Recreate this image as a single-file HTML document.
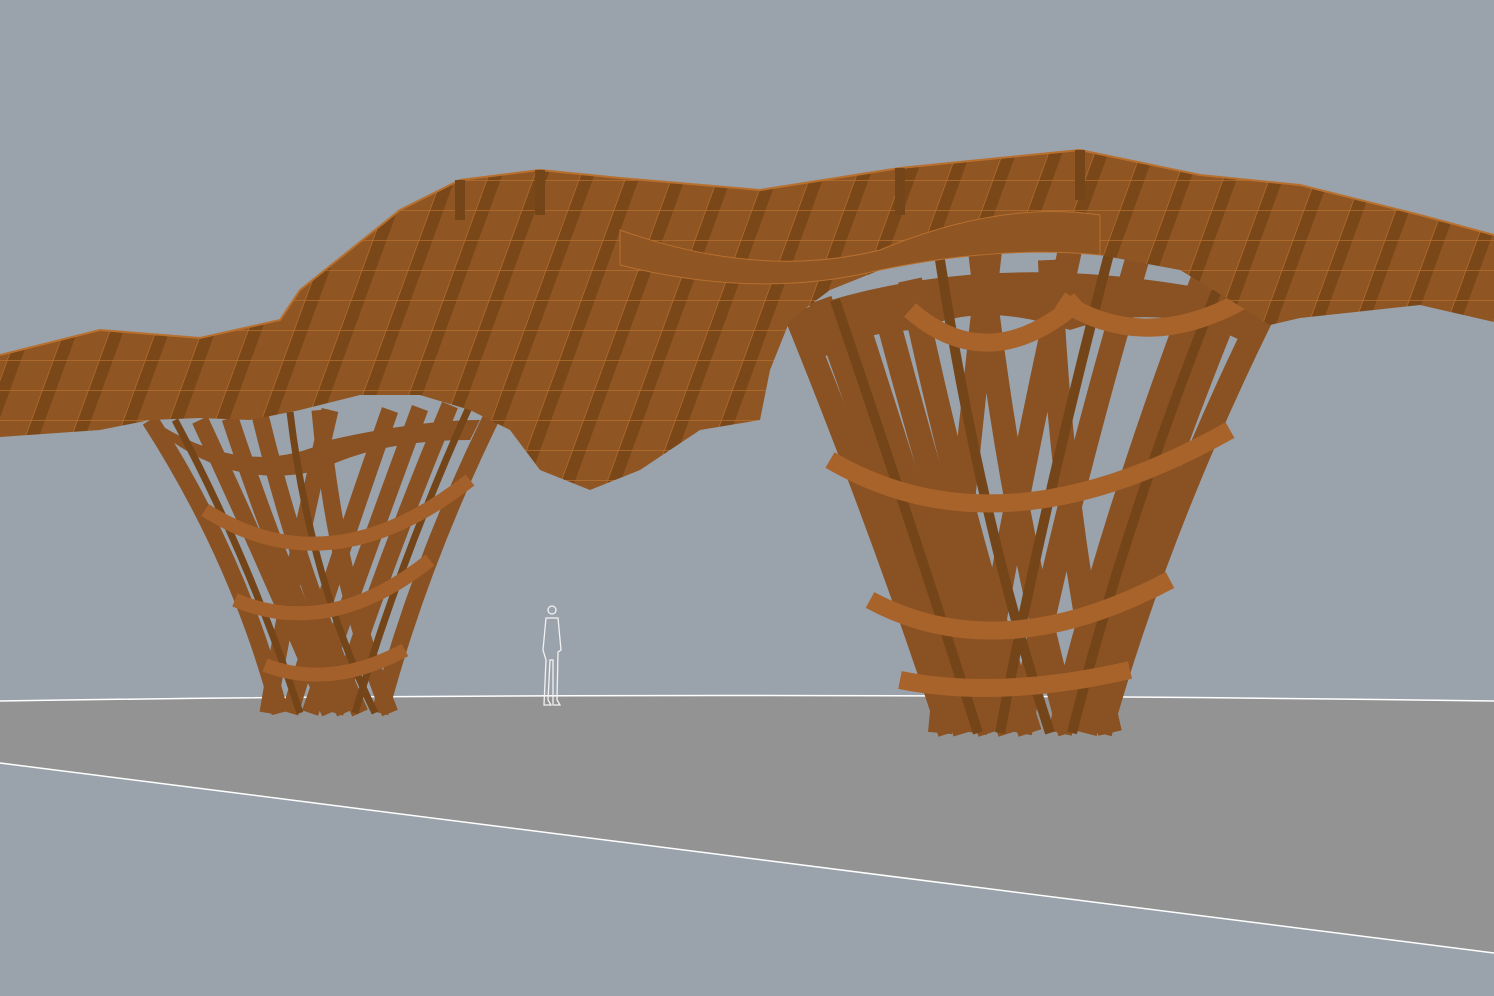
<!DOCTYPE html>
<html><head><meta charset="utf-8"><style>html,body{margin:0;padding:0;background:#9aa2ab;overflow:hidden}svg{display:block}</style></head>
<body>
<svg width="1494" height="996" viewBox="0 0 1494 996" xmlns="http://www.w3.org/2000/svg">
<defs>
<pattern id="grid" width="46" height="30" patternUnits="userSpaceOnUse" patternTransform="skewX(-20)">
<rect width="46" height="30" fill="#8f5523"/>
<rect x="0" y="0" width="14" height="30" fill="#7a4719"/>
<path d="M0 0H46M0 0V30" stroke="#b8702f" stroke-width="1.5"/>
</pattern>
</defs>
<rect width="1494" height="996" fill="#9aa2ab"/>
<path d="M0 701 Q700 690 1494 701 L1494 953 L0 763 Z" fill="#939393"/>
<path d="M0 701 Q700 690 1494 701" stroke="#fff" stroke-width="1.5" fill="none"/>
<path d="M0 763 L1494 953" stroke="#fff" stroke-width="1.5" fill="none"/>

<!-- left funnel -->
<g fill="none">
<path d="M160 425 Q250 480 330 440 Q420 420 480 420 L470 440 Q380 440 320 470 Q240 490 170 440Z" fill="#8a5122"/>
<g stroke="#8a5122" stroke-width="17">
<path d="M150 420 Q240 560 280 713"/>
<path d="M200 420 Q265 560 330 713"/>
<path d="M230 418 Q280 570 345 713"/>
<path d="M260 415 Q300 580 360 713"/>
<path d="M320 410 Q335 580 390 713"/>
<path d="M500 400 Q420 560 380 713"/>
<path d="M450 405 Q385 560 335 713"/>
<path d="M420 408 Q360 570 310 713"/>
<path d="M390 410 Q330 580 290 713"/>
<path d="M330 410 Q290 580 268 713"/>
</g>
<g stroke="#744519" stroke-width="7">
<path d="M175 420 Q250 560 300 713"/>
<path d="M470 405 Q400 560 355 713"/>
<path d="M290 412 Q310 580 375 713"/>
</g>
<g stroke="#a4602a" stroke-width="14">
<path d="M205 510 Q330 590 470 480"/>
<path d="M235 600 Q330 640 430 560"/>
<path d="M265 665 Q330 690 405 650"/>
</g>
</g>

<!-- right funnel -->
<g fill="none">
<path d="M800 310 Q1000 240 1260 300 L1240 340 Q1160 300 1070 330 Q980 300 920 330 Q860 330 820 360Z" fill="#8a5122"/>
<g stroke="#8a5122" stroke-width="24">
<path d="M790 300 Q880 520 950 733"/>
<path d="M820 300 Q900 520 965 733"/>
<path d="M850 300 Q920 520 990 733"/>
<path d="M880 290 Q940 520 1010 733"/>
<path d="M910 280 Q960 520 1030 733"/>
<path d="M980 250 Q1010 520 1070 733"/>
<path d="M1050 260 Q1060 520 1110 733"/>
<path d="M1270 300 Q1160 520 1100 733"/>
<path d="M1240 280 Q1140 520 1085 733"/>
<path d="M1210 260 Q1110 520 1060 733"/>
<path d="M1140 250 Q1060 520 1020 733"/>
<path d="M1070 250 Q1010 520 975 733"/>
<path d="M990 250 Q960 520 940 733"/>
</g>
<g stroke="#744519" stroke-width="10">
<path d="M835 300 Q910 520 978 733"/>
<path d="M1225 270 Q1125 520 1072 733"/>
<path d="M940 260 Q980 520 1050 733"/>
<path d="M1110 250 Q1040 520 1000 733"/>
</g>
<g stroke="#a8632b" stroke-width="18">
<path d="M830 460 Q1000 560 1230 430"/>
<path d="M870 600 Q1000 670 1170 580"/>
<path d="M1060 300 Q1150 360 1260 290"/>
<path d="M910 310 Q990 380 1080 300"/>
<path d="M900 680 Q1000 700 1130 670"/>
</g>
</g>

<!-- canopy -->
<path d="M0 355 L100 330 L200 338 L280 320 L300 290 L400 210 L460 180 L540 170 L620 178 L760 190 L900 168 L1080 150 L1200 175 L1300 185 L1420 215 L1494 235 L1494 322 L1420 305 L1300 318 L1270 325 L1230 300 L1180 270 L1100 255 L1000 245 L930 258 L880 270 L830 290 L790 320 L770 370 L760 420 L700 430 L640 470 L590 490 L540 470 L510 430 L470 410 L420 395 L360 395 L300 410 L250 420 L200 418 L150 420 L100 430 L0 437 Z" fill="url(#grid)"/>
<path d="M0 355 L100 330 L200 338 L280 320 L300 290 L400 210 L460 180 L540 170 L620 178 L760 190 L900 168 L1080 150 L1200 175 L1300 185 L1420 215 L1494 235" stroke="#b8702f" stroke-width="2" fill="none"/>
<path d="M620 230 Q760 280 880 250 Q1000 200 1100 215 L1100 255 Q1000 245 880 270 Q760 300 620 265 Z" fill="#8f5523" stroke="#b8702f"/>
<path d="M460 180 L460 220 M540 170 L540 215 M1080 150 L1080 200 M900 168 L900 215" stroke="#744519" stroke-width="10"/>

<g fill="none" stroke="#f2f2f2" stroke-width="1.3">
<circle cx="552" cy="610" r="4"/>
<path d="M546 618 L558 618 L561 650 L558 652 L557 700 L560 705 L553 705 L553 660 L550 660 L548 700 L551 705 L544 705 L546 660 L543 650 Z"/>
</g>
</svg>
</body></html>
